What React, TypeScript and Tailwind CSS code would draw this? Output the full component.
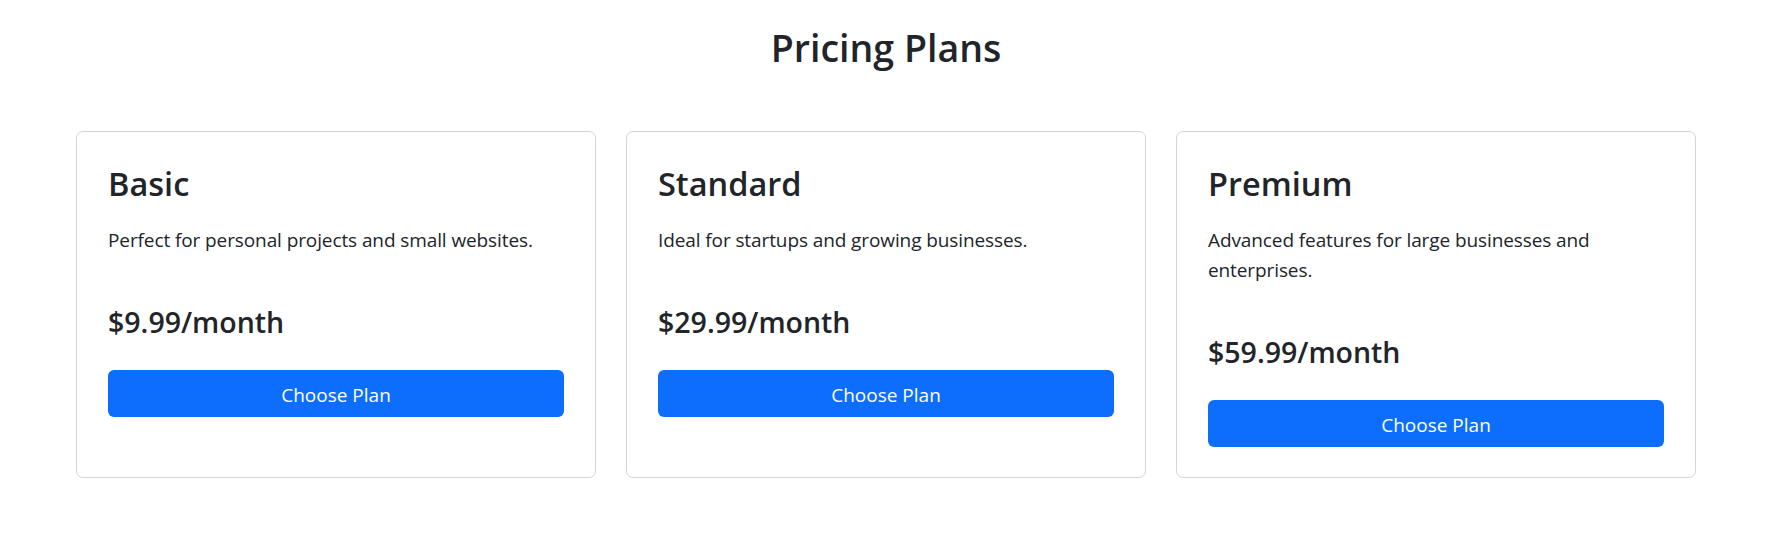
import React from "react";

const plans = [
  { name: "Basic", desc: "Perfect for personal projects and small websites.", price: "$9.99/month" },
  { name: "Standard", desc: "Ideal for startups and growing businesses.", price: "$29.99/month" },
  { name: "Premium", desc: "Advanced features for large businesses and enterprises.", price: "$59.99/month" },
];

export default function App() {
  return (
    <div className="min-h-[554px] bg-white text-[#212529] font-['Open_Sans',sans-serif]">
      <div className="ml-[76px] w-[1620px] pt-[24px]">
        <h1 className="text-center text-[37.5px] leading-[47px] font-semibold">Pricing Plans</h1>
        <div className="mt-[60px] grid grid-cols-3 gap-[30px]">
          {plans.map((p) => (
            <div
              key={p.name}
              className="flex flex-col rounded-[7px] border border-[#d4d4d4] bg-white px-[31px] pt-[31px] pb-[30px]"
            >
              <h2 className="text-[32.5px] leading-[41px] font-semibold">{p.name}</h2>
              <p className="mt-[21px] text-[19px] leading-[30px] tracking-[-0.1px]">{p.desc}</p>
              <div className="mt-[50px] text-[28.5px] leading-[34px] font-semibold">{p.price}</div>
              <button className="mt-[31px] flex h-[47px] w-full items-center justify-center rounded-[6px] bg-[#0d6efd] pt-[2px] text-[19px] leading-[26px] text-white">
                Choose Plan
              </button>
            </div>
          ))}
        </div>
      </div>
    </div>
  );
}
